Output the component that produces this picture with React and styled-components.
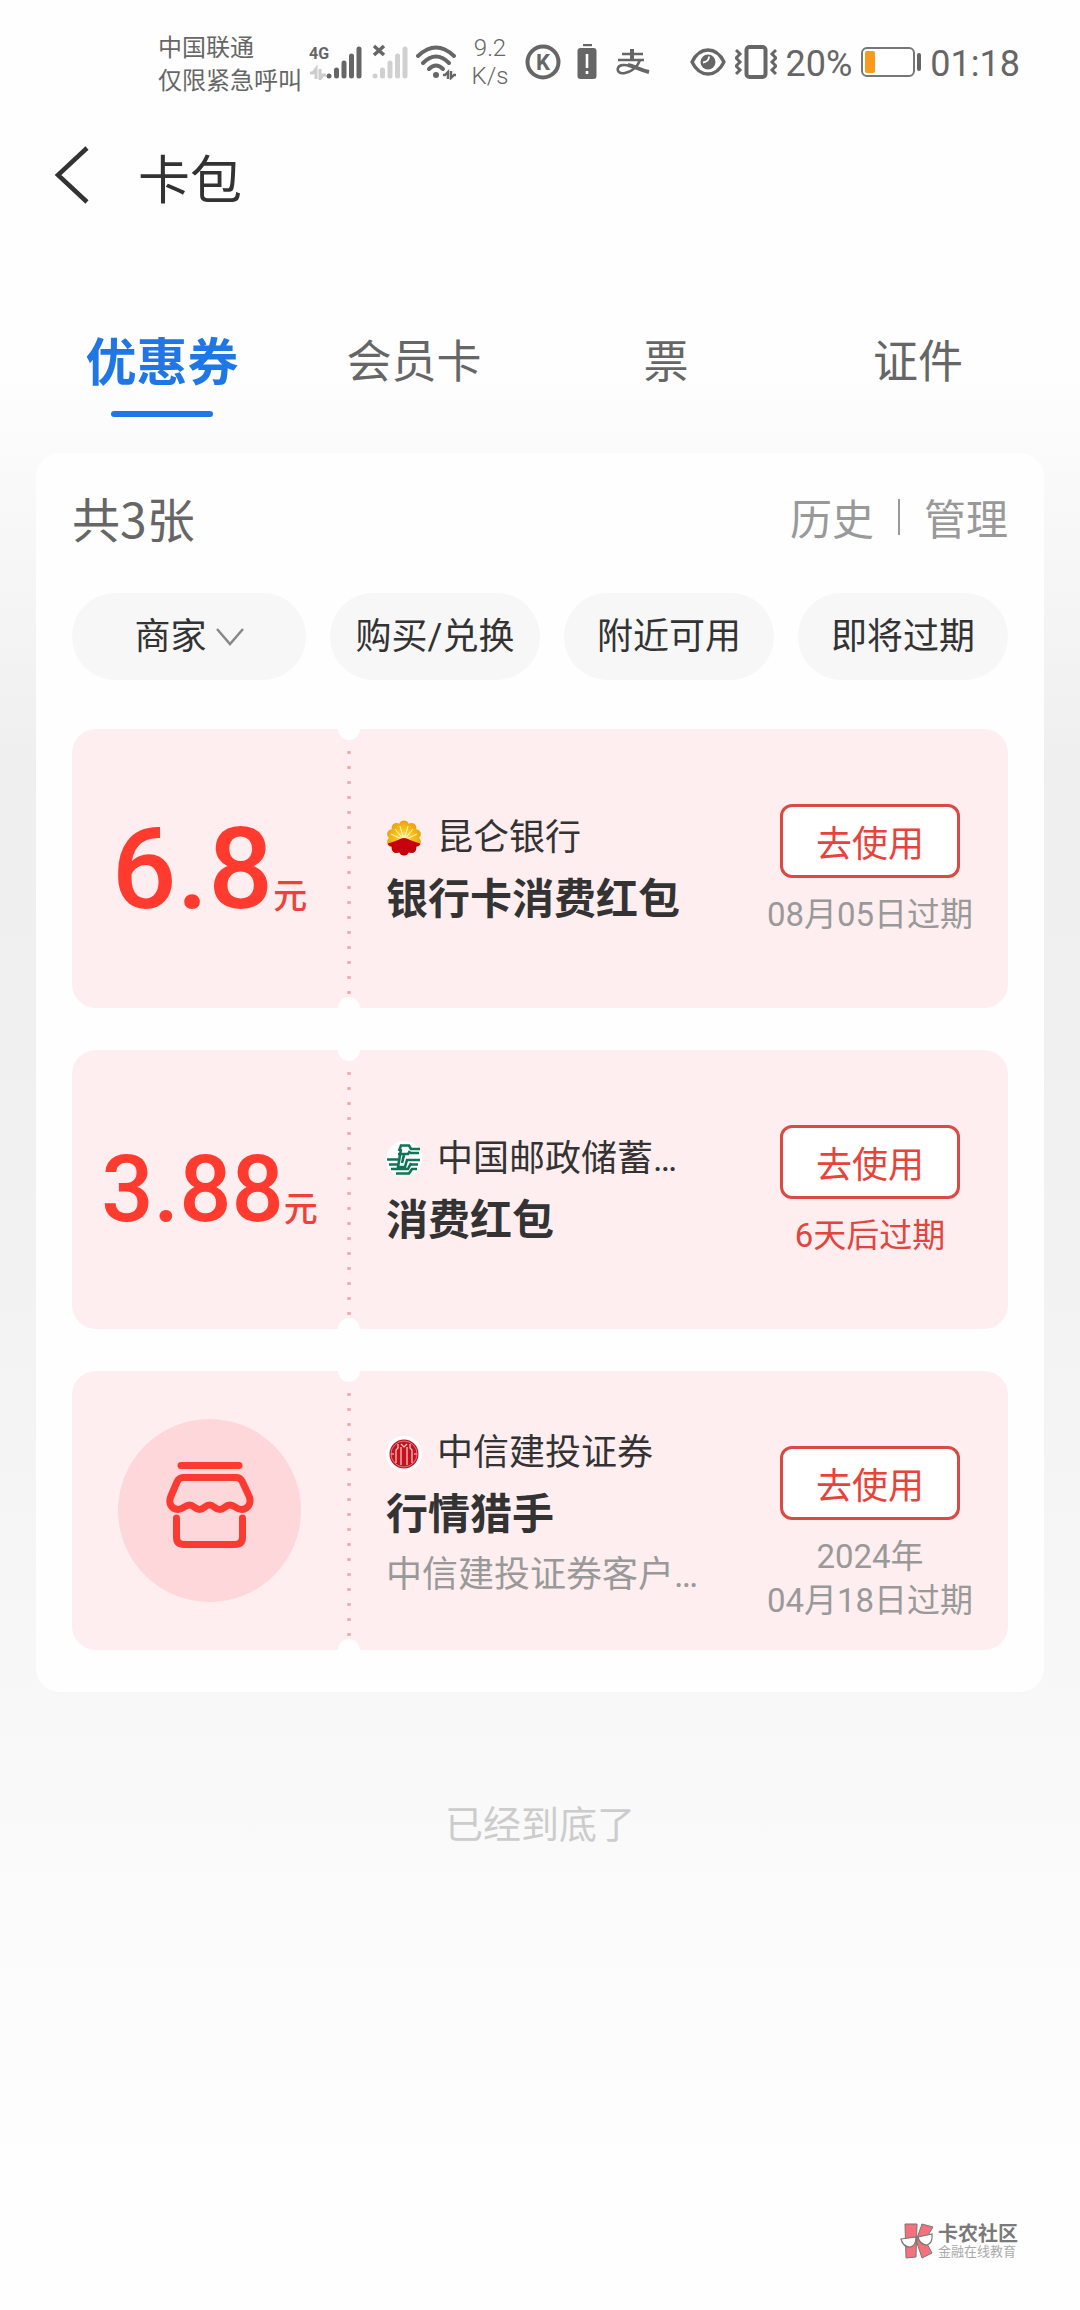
import React, { useState } from "react";
import styled, { createGlobalStyle } from "styled-components";

const cjk = `"Noto Sans CJK SC", Roboto, sans-serif`;

const GlobalStyle = createGlobalStyle`
  *, *::before, *::after { box-sizing: border-box; }
  html, body { margin: 0; padding: 0; background: #fefefe; }
  body, button, select {
    font-family: Roboto, "Noto Sans CJK SC", sans-serif;
  }
  button, select {
    border: 0;
    padding: 0;
    background: none;
    color: inherit;
    cursor: pointer;
  }
  h1, h2, h3, p, ul { margin: 0; padding: 0; font-weight: 400; }
  ul { list-style: none; }
  svg { display: block; flex: none; }
`;

const Page = styled.div`
  min-height: 100vh;
  display: flex;
  flex-direction: column;
  background: linear-gradient(
    180deg,
    #fefefe 0%,
    #fefefe 16%,
    #fafafa 20%,
    #f5f5f5 26%,
    #efefef 33%,
    #f0f0f0 46%,
    #f4f4f4 62%,
    #f8f8f8 74%,
    #fcfcfc 87%,
    #fefefe 96%
  );
`;

/* ---------- status bar ---------- */

const StatusBar = styled.div`
  display: flex;
  align-items: center;
  height: 124px;
  padding: 0 60px 0 158px;
  color: #666;
`;

const StatusGroup = styled.div`
  display: flex;
  align-items: center;
  gap: ${(p) => p.$gap}px;
  margin-left: ${(p) => p.$start || "0"};
`;

const Carrier = styled.div`
  font-family: ${cjk};
  font-size: 24px;
  line-height: 33px;
  white-space: nowrap;
`;

const Speed = styled.div`
  width: 38px;
  font-size: 24px;
  line-height: 28px;
  font-weight: 300;
  text-align: center;
`;

const StatusText = styled.span`
  font-size: 36px;
  line-height: 42px;
  padding-top: 3px;
`;

const Bars = ({ color, x }) => (
  <g stroke={color} strokeWidth="5" strokeLinecap="round">
    <path d={`M${x} 32v0`} />
    <path d={`M${x + 7.5} 32V26`} />
    <path d={`M${x + 15} 32V19`} />
    <path d={`M${x + 22.5} 32V12`} />
    <path d={`M${x + 30} 32V5`} />
  </g>
);

const SignalMain = () => (
  <svg width="54" height="36" viewBox="0 0 54 36" fill="none">
    <text x="0" y="15" fontSize="16" fontWeight="700" fontFamily="Roboto, sans-serif" fill="#666">4G</text>
    <path d="M1 29h3l3-4v10M11 25v10l3-4h3" stroke="#ccc" strokeWidth="3" />
    <Bars color="#666" x={20} />
  </svg>
);

const SignalEmpty = () => (
  <svg width="38" height="36" viewBox="0 0 38 36" fill="none">
    <path d="M4 2l10 9M14 2l-10 9" stroke="#666" strokeWidth="3.5" />
    <Bars color="#d0d0d0" x={5} />
  </svg>
);

const Wifi = () => (
  <svg width="42" height="36" viewBox="0 0 42 36" fill="none" stroke="#666" strokeLinecap="round">
    <path d="M3 12Q21 -5 39 12" strokeWidth="4" />
    <path d="M8 19Q21 6 34 19" strokeWidth="4" />
    <path d="M14 25Q21 18 28 25" strokeWidth="4" />
    <circle cx="21" cy="31" r="3" fill="#666" stroke="none" />
    <path d="M28 31h2l3-3v7M36 27v7l3-3h2" strokeWidth="2.4" strokeLinecap="butt" />
  </svg>
);

const CircleK = () => (
  <svg width="36" height="38" viewBox="0 0 36 38" fill="none">
    <circle cx="18" cy="19" r="15.5" stroke="#666" strokeWidth="4" />
    <text x="18" y="27" textAnchor="middle" fontSize="22" fontWeight="700" fontFamily="Roboto, sans-serif" fill="#666">K</text>
  </svg>
);

const BatteryAlert = () => (
  <svg width="20" height="36" viewBox="0 0 20 36">
    <path d="M6 1h9" stroke="#666" strokeWidth="2.4" />
    <rect x="0.5" y="4" width="19" height="31" rx="3" fill="#666" />
    <path d="M10 10v14M10 27v3" stroke="#fff" strokeWidth="2.6" />
  </svg>
);

const PayMark = () => (
  <svg width="38" height="30" viewBox="0 0 38 30" fill="none" stroke="#666">
    <path d="M9 7h21M5 13h26" strokeWidth="2.6" />
    <path d="M19 2v11" strokeWidth="4" />
    <path d="M27 13c-2 6-8 12-15 13c-6 1-8-2-7-5c1-3 6-4 12-2" strokeWidth="2.6" />
    <path d="M15 18c6 1 12 5 21 7" strokeWidth="4" />
  </svg>
);

const EyeIcon = () => (
  <svg width="36" height="30" viewBox="0 0 36 30" fill="none">
    <path d="M2 15C10 -1 26 -1 34 15C26 31 10 31 2 15Z" stroke="#666" strokeWidth="3.4" strokeLinejoin="round" />
    <circle cx="18" cy="15" r="7.500" fill="#666" />
    <path d="M19 9.500q0 5-6 6" stroke="#fff" strokeWidth="1.800" />
  </svg>
);

const VibrateIcon = () => (
  <svg width="42" height="36" viewBox="0 0 42 36" fill="none" stroke="#666">
    <rect x="11.500" y="3" width="19" height="30" rx="3" strokeWidth="4" />
    <path d="M1 6l4 4-4 4 4 4-4 4 4 4-4 4" strokeWidth="3" />
    <path d="M41 6l-4 4 4 4-4 4 4 4-4 4 4 4" strokeWidth="3" />
  </svg>
);

const BatteryIcon = () => (
  <svg width="60" height="30" viewBox="0 0 60 30" fill="none">
    <rect x="1" y="1" width="52" height="28" rx="5" stroke="#777" strokeWidth="2" fill="#fff" />
    <rect x="4" y="4" width="10" height="22" rx="2" fill="#f99a1c" />
    <path d="M58 8v14" stroke="#666" strokeWidth="4" strokeLinecap="round" />
  </svg>
);

/* ---------- header and tabs ---------- */

const Header = styled.header`
  display: flex;
  align-items: center;
  gap: 48px;
  height: 106px;
  padding: 0 52px;
  color: #333;
`;

const BackButton = styled.button`
  display: flex;
  padding: 8px 0 12px;
`;

const Title = styled.h1`
  font-family: ${cjk};
  font-size: 52px;
  line-height: 60px;
`;

const Tabs = styled.nav`
  display: grid;
  grid-template-columns: repeat(4, 1fr);
  margin: 99px 36px 36px;
`;

const Tab = styled.button`
  display: flex;
  flex-direction: column;
  align-items: center;
  gap: 22px;
  font-family: ${cjk};
  font-size: ${(p) => (p.$active ? 51 : 45)}px;
  font-weight: ${(p) => (p.$active ? 700 : 400)};
  line-height: 60px;
  color: ${(p) => (p.$active ? "#1f77e6" : "#666")};

  &::after {
    content: "";
    width: 102px;
    height: 6px;
    border-radius: 3px;
    background: ${(p) => (p.$active ? "#1f77e6" : "transparent")};
  }
`;

/* ---------- coupon panel ---------- */

const Panel = styled.main`
  display: flex;
  flex-direction: column;
  margin: 0 36px;
  padding: 34px 36px 42px;
  border-radius: 24px;
  background: #fefefe;
`;

const PanelHead = styled.div`
  display: flex;
  align-items: center;
  justify-content: space-between;
  height: 60px;
`;

const Count = styled.h2`
  font-family: ${cjk};
  font-size: 48px;
  line-height: 60px;
  color: #666;
`;

const HeadLinks = styled.div`
  display: flex;
  align-items: center;
  gap: 24px;
`;

const HeadLink = styled.a`
  font-family: ${cjk};
  font-size: 42px;
  line-height: 60px;
  color: #999;
  text-decoration: none;
`;

const HeadRule = styled.span`
  width: 2px;
  height: 36px;
  background: #999;
`;

const Filters = styled.div`
  display: grid;
  grid-template-columns: 234fr 210fr 210fr 210fr;
  gap: 24px;
  margin: 46px 0 49px;
  font-size: 36px;
  line-height: 42px;
  color: #333;
`;

const pill = `
  display: flex;
  align-items: center;
  justify-content: center;
  height: 87px;
  border-radius: 44px;
  background: #f7f7f7;
`;

const FilterButton = styled.button`
  ${pill}
  font-size: 36px;
  line-height: 42px;
  white-space: nowrap;
`;

const FilterDrop = styled.div`
  ${pill}
  gap: 8px;
`;

const FilterSelect = styled.select`
  appearance: none;
  font-size: 36px;
  line-height: 42px;
  outline: 0;
`;

const CouponList = styled.ul`
  display: flex;
  flex-direction: column;
  gap: 42px;
`;

const Coupon = styled.li`
  display: flex;
  min-height: 279px;
  border-radius: 24px;
  background: #feeeef;
`;

const Value = styled.div`
  display: flex;
  align-items: center;
  justify-content: center;
  flex: 0 0 275px;
`;

const Amount = styled.p`
  display: flex;
  align-items: baseline;
  color: #ff3b30;
  font-size: ${(p) => p.$size}px;
  line-height: 120px;
  font-weight: 500;
`;

const Unit = styled.span`
  font-size: 34px;
  line-height: 40px;
  font-weight: 500;
  color: #ee4139;
`;

const Tear = styled.div`
  position: relative;
  flex: 0 0 4px;
  padding: 16px 0 14px;

  &::before,
  &::after {
    content: "";
    position: absolute;
    left: -9px;
    width: 22px;
    height: 22px;
    border-radius: 50%;
    background: #fefefe;
  }
  &::before { top: -11px; }
  &::after { bottom: -11px; }
`;

const Dots = styled.div`
  height: 100%;
  background: radial-gradient(circle, #efaab2 1px, #f6c6cb 2px, transparent 2px) 0 0 / 4px 15px repeat-y;
`;

const Info = styled.div`
  display: flex;
  flex-direction: column;
  justify-content: center;
  flex: 1;
  min-width: 0;
  padding: ${(p) => (p.$tall ? 8 : 0)}px 58px 0 35px;
  white-space: nowrap;
`;

const Brand = styled.div`
  display: flex;
  align-items: center;
  gap: 15px;
`;

const BrandName = styled.span`
  font-size: 36px;
  line-height: 61px;
  color: #333;
`;

const CouponName = styled.h3`
  font-size: 42px;
  line-height: 61px;
  font-weight: 700;
  color: #333;
`;

const Detail = styled.p`
  font-size: 36px;
  line-height: 61px;
  color: #999;
`;

const Action = styled.div`
  display: flex;
  flex-direction: column;
  align-items: center;
  gap: 15px;
  flex: 0 0 208px;
  margin-right: 34px;
  padding-top: 75px;
`;

const UseButton = styled.button`
  width: 180px;
  height: 74px;
  border: 3px solid #d94a43;
  border-radius: 12px;
  background: #fff;
  color: #e8433b;
  font-family: ${cjk};
  font-size: 36px;
  line-height: 42px;
`;

const Expiry = styled.p`
  font-size: 33px;
  line-height: 44px;
  text-align: center;
  white-space: pre-line;
  color: ${(p) => (p.$soon ? "#e2453e" : "#999")};
`;

const ShopBadge = styled.div`
  display: flex;
  align-items: center;
  justify-content: center;
  width: 183px;
  height: 183px;
  padding-bottom: 12px;
  border-radius: 50%;
  background: #fed7da;
`;

const EndNote = styled.p`
  margin-top: 100px;
  font-family: ${cjk};
  font-size: 38px;
  line-height: 60px;
  text-align: center;
  color: #ccc;
`;

const Footer = styled.footer`
  display: flex;
  justify-content: flex-end;
  align-items: center;
  gap: 4px;
  margin-top: auto;
  padding: 0 62px 50px;
`;

const SiteName = styled.div`
  font-family: ${cjk};
  font-size: 20px;
  line-height: 22px;
  font-weight: 700;
  color: #7a7a7a;
`;

const SiteSlogan = styled.div`
  font-size: 13px;
  line-height: 16px;
  color: #aaa;
`;

/* ---------- drawings ---------- */

const ShopIcon = () => (
  <svg width="88" height="88" viewBox="0 0 88 88" fill="none" stroke="#fb3b32" strokeWidth="7" strokeLinecap="round" strokeLinejoin="round">
    <path d="M15 4.500H73" />
    <path d="M17 16.500H70Q74 16.500 76 20L83 35C86 42 82 48 76 48.500C71 49 69 44 64 44C59 44 58 48.500 54 48.500C49 48.500 48 44 43.500 44C39 44 38 48.500 33.500 48.500C29 48.500 28 44 23.500 44C19 44 17 48.500 12 48.500C5 48 2 42 5 35L11 21Q13 16.500 17 16.500Z" />
    <path d="M10.500 57V76Q10.500 83.500 18 83.500H69Q76.500 83.500 76.500 76V57" />
  </svg>
);

const petals = Array.from({ length: 10 }, (_, i) => {
  const a = (i * Math.PI) / 5 + Math.PI / 10;
  return [18 + 12.5 * Math.cos(a), 18 + 12.5 * Math.sin(a)];
});

const PetroLogo = () => (
  <svg width="36" height="36" viewBox="0 0 36 36">
    <defs>
      <clipPath id="flower">
        <circle cx="18" cy="18" r="15" />
        {petals.map(([x, y], i) => (
          <circle key={i} cx={x} cy={y} r="5" />
        ))}
      </clipPath>
      <radialGradient id="sun" cx="0.5" cy="0.5" r="0.55">
        <stop offset="0" stopColor="#fff3a0" />
        <stop offset="0.4" stopColor="#f8c51c" />
        <stop offset="1" stopColor="#e59a0c" />
      </radialGradient>
    </defs>
    <g clipPath="url(#flower)">
      <rect width="36" height="36" fill="url(#sun)" />
      <path d="M18 20L5 14M18 20L9 9M18 20L14 6M18 20L22 6M18 20L27 9M18 20L31 14" stroke="#fff6c4" strokeWidth="1" />
      <path d="M0 24Q8 22 12 20Q18 16 24 20Q28 22 36 24V36H0Z" fill="#c8000e" />
    </g>
  </svg>
);

const PostLogo = () => (
  <svg width="36" height="36" viewBox="0 0 36 36" fill="none">
    <circle cx="18" cy="18" r="18" fill="#fff" />
    <g stroke="#0f7556" strokeWidth="2.6">
      <path d="M13 10L15 4.500H23L25 8H34" />
      <path d="M12 13H22L24 10M24 12H33" />
      <path d="M1 18.500H12M3 23.500H12" />
      <path d="M15 8L12 26H19L21 19H34" />
      <path d="M18 14L16 22M24 23.500H32" />
      <path d="M5 28H22L25 22" />
      <path d="M10 32.500H23L26 28H31" />
    </g>
  </svg>
);

const CiticLogo = () => (
  <svg width="36" height="36" viewBox="0 0 36 36" fill="none">
    <circle cx="18" cy="18" r="18" fill="#fff" />
    <circle cx="18" cy="18" r="14.500" fill="#c4131f" />
    <circle cx="18" cy="18" r="13" stroke="#e58f95" strokeWidth="0.8" />
    <path d="M15 11V29M21 11V29M12 8V12L10 14V27M24 8V12L26 14V27M15 8L18 11L21 8M5 18H8M31 18H28" stroke="#f7cfd2" strokeWidth="1.2" />
  </svg>
);

const SiteLogo = () => (
  <svg width="34" height="36" viewBox="0 0 34 36">
    <g fill="#f4717c" stroke="#777" strokeWidth="1">
      <path d="M5 1L17 1L16 34L6 35Z" />
      <path d="M17 15L22 1L33 4L25 17L32 30L22 35L17 20Z" />
    </g>
    <g fill="#fff" stroke="#777" strokeWidth="1.2">
      <path d="M1 16L16 14Q16 23 10 24Q3 24 1 16Z" />
      <path d="M18 14L32 11Q33 20 27 22Q20 22 18 14Z" />
    </g>
  </svg>
);

const TABS = ["优惠券", "会员卡", "票", "证件"];

const COUPONS = [
  { amount: "6.8", size: 114, Logo: PetroLogo, brand: "昆仑银行", name: "银行卡消费红包", expiry: "08月05日过期" },
  { amount: "3.88", size: 92, Logo: PostLogo, brand: "中国邮政储蓄…", name: "消费红包", expiry: "6天后过期", soon: true },
  { Logo: CiticLogo, brand: "中信建投证券", name: "行情猎手", detail: "中信建投证券客户…", expiry: "2024年\n04月18日过期" },
];

export default function App() {
  const [tab, setTab] = useState(TABS[0]);

  return (
    <>
      <GlobalStyle />
      <Page>
        <StatusBar>
          <StatusGroup $gap={7}>
            <Carrier>
              中国联通
              <br />
              仅限紧急呼叫
            </Carrier>
            <SignalMain />
            <SignalEmpty />
            <Wifi />
          </StatusGroup>
          <StatusGroup $gap={16} $start="14px">
            <Speed>9.2 K/s</Speed>
            <CircleK />
            <BatteryAlert />
            <PayMark />
          </StatusGroup>
          <StatusGroup $gap={9} $start="auto">
            <EyeIcon />
            <VibrateIcon />
            <StatusText>20%</StatusText>
            <BatteryIcon />
            <StatusText>01:18</StatusText>
          </StatusGroup>
        </StatusBar>

        <Header>
          <BackButton aria-label="返回">
            <svg width="38" height="58" viewBox="0 0 38 58" fill="none">
              <path d="M35 2L6 29L35 56" stroke="#333" strokeWidth="4.500" />
            </svg>
          </BackButton>
          <Title>卡包</Title>
        </Header>

        <Tabs>
          {TABS.map((name) => (
            <Tab key={name} $active={name === tab} onClick={() => setTab(name)}>
              {name}
            </Tab>
          ))}
        </Tabs>

        <Panel>
          <PanelHead>
            <Count>共3张</Count>
            <HeadLinks>
              <HeadLink href="#history">历史</HeadLink>
              <HeadRule />
              <HeadLink href="#manage">管理</HeadLink>
            </HeadLinks>
          </PanelHead>

          <Filters>
            <FilterDrop>
              <FilterSelect aria-label="商家">
                <option>商家</option>
              </FilterSelect>
              <svg width="28" height="20" viewBox="0 0 28 20" fill="none">
                <path d="M1 2L14 17L27 2" stroke="#888" strokeWidth="2.500" />
              </svg>
            </FilterDrop>
            <FilterButton>购买/兑换</FilterButton>
            <FilterButton>附近可用</FilterButton>
            <FilterButton>即将过期</FilterButton>
          </Filters>

          <CouponList>
            {COUPONS.map(({ amount, size, Logo, brand, name, detail, expiry, soon }) => (
              <Coupon key={name}>
                <Value>
                  {amount ? (
                    <Amount $size={size}>
                      {amount}
                      <Unit>元</Unit>
                    </Amount>
                  ) : (
                    <ShopBadge>
                      <ShopIcon />
                    </ShopBadge>
                  )}
                </Value>
                <Tear>
                  <Dots />
                </Tear>
                <Info $tall={Boolean(detail)}>
                  <Brand>
                    <Logo />
                    <BrandName>{brand}</BrandName>
                  </Brand>
                  <CouponName>{name}</CouponName>
                  {detail && <Detail>{detail}</Detail>}
                </Info>
                <Action>
                  <UseButton>去使用</UseButton>
                  <Expiry $soon={soon}>{expiry}</Expiry>
                </Action>
              </Coupon>
            ))}
          </CouponList>
        </Panel>

        <EndNote>已经到底了</EndNote>

        <Footer>
          <SiteLogo />
          <div>
            <SiteName>卡农社区</SiteName>
            <SiteSlogan>金融在线教育</SiteSlogan>
          </div>
        </Footer>
      </Page>
    </>
  );
}
